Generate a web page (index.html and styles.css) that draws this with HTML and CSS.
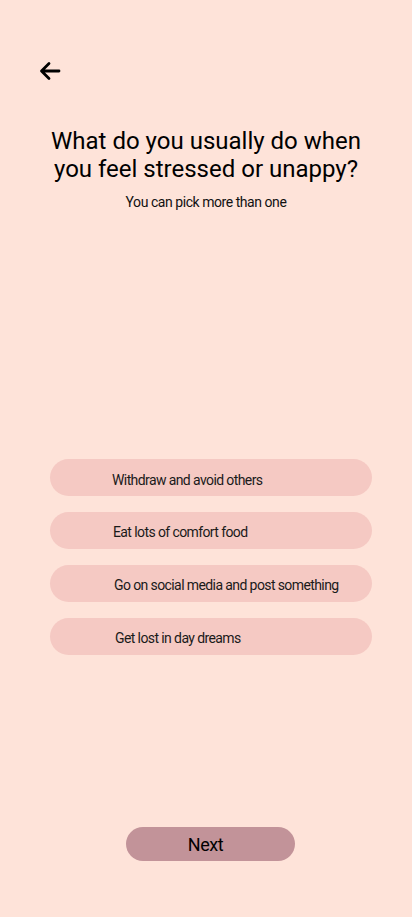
FILE: index.html
```html
<!DOCTYPE html>
<html>
<head>
<meta charset="utf-8">
<link rel="stylesheet" href="styles.css">
</head>
<body>
<div class="screen">
  <div class="top">
    <button class="back" aria-label="Back">
      <svg width="22" height="20" viewBox="0 0 22 20"><path d="M20 10H3M10 2.5L2.5 10L10 17.5" fill="none" stroke="#000" stroke-width="2.8" stroke-linecap="round" stroke-linejoin="round"/></svg>
    </button>
  </div>
  <h1 class="title">What do you usually do when you feel stressed or unappy?</h1>
  <p class="sub">You can pick more than one</p>
  <div class="options">
    <div class="opt">Withdraw and avoid others</div>
    <div class="opt o2">Eat lots of comfort food</div>
    <div class="opt o3">Go on social media and post something</div>
    <div class="opt o4">Get lost in day dreams</div>
  </div>
  <div class="footer">
    <button class="next">Next</button>
  </div>
</div>
</body>
</html>
```
FILE: styles.css
```css
* { box-sizing: border-box; }
html, body { margin: 0; padding: 0; }
body { background: #FEE3D9; font-family: Roboto, "Liberation Sans", sans-serif; color: #000; }
.screen { width: 412px; height: 917px; display: flex; flex-direction: column; }
.top { padding: 61px 0 0 39px; height: 82px; }
.back { background: none; border: 0; padding: 0; width: 22px; height: 20px; display: block; }
.back svg { display: block; }
.title { margin: 45px 0 0; padding: 0 40px; font-size: 24px; font-weight: 400; line-height: 28px; text-align: center; }
.sub { margin: 10px 0 0; text-align: center; font-size: 14px; line-height: 18px; letter-spacing: -0.45px; color: #111; }
.options { margin: 248px 0 0 50px; width: 322px; display: flex; flex-direction: column; gap: 16px; }
.opt { height: 37px; border-radius: 19px; background: #F5C9C3; display: flex; align-items: center; padding: 4px 0 0 62px; font-size: 14px; letter-spacing: -0.6px; color: #1a1a1a; }
.o2 { padding-left: 63px; padding-top: 3px; }
.o3 { padding-left: 64px; padding-top: 2px; }
.o4 { padding-left: 65px; padding-top: 2px; }
.footer { margin-top: auto; padding: 0 0 56px 126px; display: flex; }
.next { width: 169px; height: 34px; border: 0; border-radius: 17px; background: #C29399; font-family: Roboto, sans-serif; font-size: 18px; color: #000; letter-spacing: -0.4px; padding: 0 10px 0 0; }
```
